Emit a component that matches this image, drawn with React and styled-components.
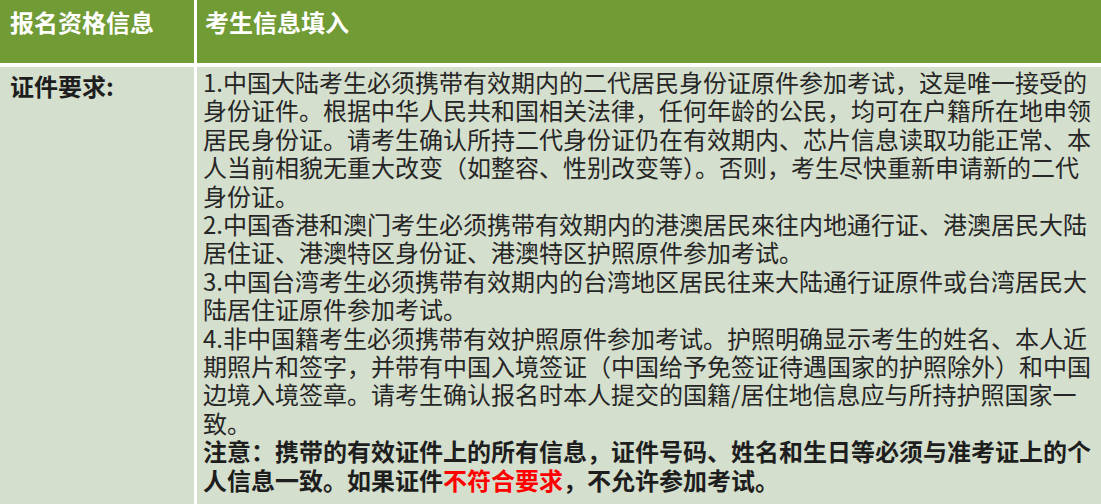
import styled, { createGlobalStyle } from "styled-components";

const GlobalStyle = createGlobalStyle`
  html, body {
    margin: 0;
    padding: 0;
    overflow: hidden;
    background: #ffffff;
  }
  body {
    font-family: "Noto Sans CJK SC", "Noto Sans", sans-serif;
  }
`;

const Table = styled.div`
  display: grid;
  grid-template-columns: 194px 1fr;
  grid-template-rows: 63px 437px;
  column-gap: 3px;
  row-gap: 4px;
  width: 1101px;
  height: 504px;
  background: #ffffff;
`;

const HeadCell = styled.div`
  background: #709b35;
  color: #ffffff;
  font-size: 24px;
  font-weight: 700;
  line-height: 28px;
  padding: ${(props) => (props.first ? "8px 0 0 10px" : "8px 0 0 8px")};
`;

const LabelCell = styled.div`
  background: #d5dfcd;
  color: #1e1e1e;
  font-size: 24px;
  font-weight: 700;
  line-height: 28.4px;
  padding: 5px 0 0 10px;
`;

const BodyCell = styled.div`
  background: #d5dfcd;
  color: #262626;
  font-size: 24px;
  line-height: 28.4px;
  padding: 1px 0 0 6px;
  white-space: nowrap;
  overflow: hidden;
`;

const Para = styled.p`
  margin: 0;
  font-weight: ${(props) => (props.strong ? 700 : 400)};
  color: ${(props) => (props.strong ? "#1e1e1e" : "inherit")};
`;

const Warn = styled.span`
  color: #ff0000;
`;

const App = () => {
  return (
    <>
      <GlobalStyle />
      <Table>
        <HeadCell first>报名资格信息</HeadCell>
        <HeadCell>考生信息填入</HeadCell>
        <LabelCell>证件要求:</LabelCell>
        <BodyCell>
          <Para>
            1.中国大陆考生必须携带有效期内的二代居民身份证原件参加考试，这是唯一接受的
            <br />
            身份证件。根据中华人民共和国相关法律，任何年龄的公民，均可在户籍所在地申领
            <br />
            居民身份证。请考生确认所持二代身份证仍在有效期内、芯片信息读取功能正常、本
            <br />
            人当前相貌无重大改变（如整容、性别改变等）。否则，考生尽快重新申请新的二代
            <br />
            身份证。
          </Para>
          <Para>
            2.中国香港和澳门考生必须携带有效期内的港澳居民來往内地通行证、港澳居民大陆
            <br />
            居住证、港澳特区身份证、港澳特区护照原件参加考试。
          </Para>
          <Para>
            3.中国台湾考生必须携带有效期内的台湾地区居民往来大陆通行证原件或台湾居民大
            <br />
            陆居住证原件参加考试。
          </Para>
          <Para>
            4.非中国籍考生必须携带有效护照原件参加考试。护照明确显示考生的姓名、本人近
            <br />
            期照片和签字，并带有中国入境签证（中国给予免签证待遇国家的护照除外）和中国
            <br />
            边境入境签章。请考生确认报名时本人提交的国籍/居住地信息应与所持护照国家一
            <br />
            致。
          </Para>
          <Para strong>
            注意：携带的有效证件上的所有信息，证件号码、姓名和生日等必须与准考证上的个
            <br />
            人信息一致。如果证件<Warn>不符合要求</Warn>，不允许参加考试。
          </Para>
        </BodyCell>
      </Table>
    </>
  );
};

export default App;
